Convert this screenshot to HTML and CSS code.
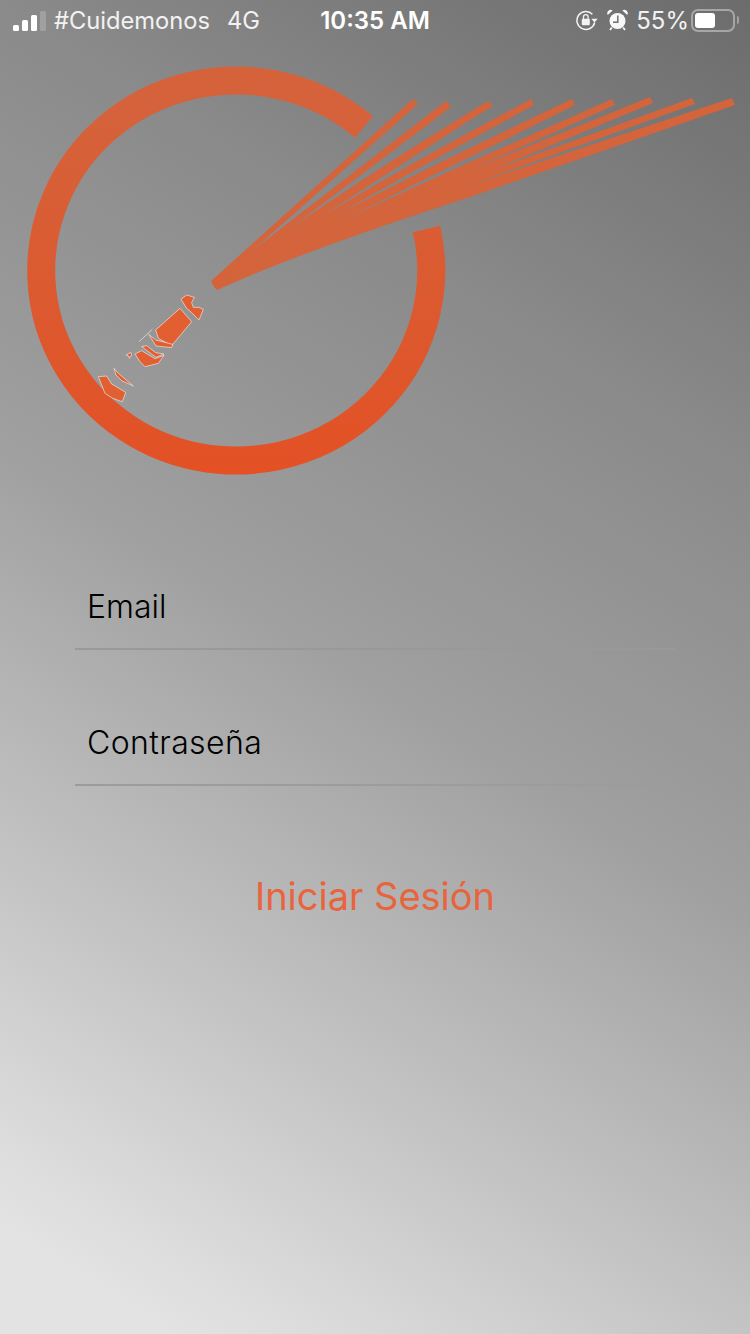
FILE: index.html
```html
<!DOCTYPE html>
<html lang="es">
<head>
<meta charset="utf-8">
<title>Iniciar Sesión</title>
<link rel="stylesheet" href="styles.css">
</head>
<body>
<main class="screen">
  <header class="status">
    <div class="status-left">
      <span class="signal"><i class="b b1"></i><i class="b b2"></i><i class="b b3"></i><i class="b b4"></i></span>
      <span class="carrier">#Cuidemonos</span>
      <span class="net">4G</span>
    </div>
    <div class="status-time">10:35 AM</div>
    <div class="status-right">
      <svg class="ico-lock" viewBox="0 0 23 22" width="23" height="22">
        <path d="M17.4 5.200A9 9 0 1 0 19.700 13.500" fill="none" stroke="#f4f4f4" stroke-width="1.500"/>
        <path d="M16.300 9.800h6.400l-3.200 3.800z" fill="#f4f4f4"/>
        <rect x="6.800" y="9.800" width="8" height="6.400" rx="1" fill="#f4f4f4"/>
        <path d="M8.500 10V8a2.300 2.300 0 0 1 4.600 0V10" fill="none" stroke="#f4f4f4" stroke-width="1.300"/>
      </svg>
      <svg class="ico-alarm" viewBox="0 0 21 22" width="21" height="22">
        <circle cx="10.500" cy="12" r="8" fill="#f8f8f8"/>
        <path d="M10.800 6.500V13.300H6" fill="none" stroke="#6f6f6f" stroke-width="1.500"/>
        <path d="M.8 6 5.600 1.400A3.400 3.400 0 0 0 .8 6zM20.200 6 15.400 1.400A3.400 3.400 0 0 1 20.200 6z" fill="#f8f8f8"/>
        <path d="M4.800 18.400 3 21M16.200 18.400 18 21" stroke="#f8f8f8" stroke-width="1.800"/>
      </svg>
      <span class="pct">55%</span>
      <span class="battery"><span class="battery-fill"></span></span>
      <span class="battery-cap"></span>
    </div>
  </header>

  <svg class="logo" viewBox="0 40 750 480" width="750" height="480" aria-label="Logo">
    <defs>
      <linearGradient id="logoGrad" gradientUnits="userSpaceOnUse" x1="0" y1="120" x2="0" y2="470">
        <stop offset="0" stop-color="#d5623a"/>
        <stop offset="1" stop-color="#e35125"/>
      </linearGradient>
    </defs>
    <path class="ring" d="M364 127A195 190 0 1 0 426.500 229"/>
    <g class="rays">
      <path d="M211 281 413 99 418 104 213.500 285Z"/>
      <path d="M211.700 282 446 101 451 107 214 286Z"/>
      <path d="M212.300 283Q340 191 470 112L488 101 493 106 470 120Q340 204 214.500 287Z"/>
      <path d="M213 284Q340 202 470 132L531 99 534 105 470 140Q340 211 215 288Z"/>
      <path d="M213.700 285Q320 220 470 148L572 99 575 105 470 157Q320 231 215.500 288Z"/>
      <path d="M214.300 286Q320 229 470 162L612 99 615 105 470 170Q320 237 216 289Z"/>
      <path d="M215 287Q310 235 470 170L650 97 653 103 470 179Q310 245 216.500 289Z"/>
      <path d="M215.700 288Q300 239 470 178L692 98 695 104 470 185Q300 246 217 290Z"/>
      <path d="M216.300 289Q300 241 470 185L732 98 735 105 470 197Q300 252 217 290Z"/>
    </g>
    <g class="shards" transform="translate(90 280) scale(.33333)">
      <path d="M273 58 290 45 313 52 305 68 310 82 327 82 340 88 327 120 305 98 290 85Z"/>
      <path d="M197 150 270 85 305 125 245 197 205 175Z"/>
      <path d="M176 163 197 180 248 193 245 203 198 198Z"/>
      <path d="M155 200 170 197 197 218 222 222 198 232Z"/>
      <path d="M135 222 155 212 195 236 222 226 205 250 165 260 150 245Z"/>
      <path d="M25 290 50 288 65 312 107 337 97 365 68 355 45 340Z"/>
      <path d="M72 265 85 280 130 318 95 302 78 285Z"/>
      <path d="M108 225 122 217 125 225 118 235 116 228Z"/>
      <path class="sliver" d="M147 185 187 148"/>
    </g>
  </svg>

  <form class="form">
    <div class="field field-email">Email</div>
    <div class="field field-pass">Contraseña</div>
    <button class="submit" type="button">Iniciar Sesión</button>
  </form>
</main>
</body>
</html>
```

FILE: styles.css
```css
* { box-sizing: border-box; }
html, body { margin: 0; padding: 0; }
body { width: 750px; height: 1334px; overflow: hidden; font-family: Inter, "Liberation Sans", sans-serif; }
.screen {
  width: 750px;
  height: 1334px;
  background: linear-gradient(212deg, #6c6c6c 0%, #8a8a8a 26%, #9f9f9f 50%, #c4c4c4 74%, #dcdcdc 89%, #e3e3e3 94%, #e3e3e3 100%);
  display: flex;
  flex-direction: column;
}
.status {
  height: 40px;
  padding: 0 11px 0 13px;
  display: flex;
  align-items: center;
  justify-content: space-between;
  color: #fff;
  font-size: 23.7px;
  position: relative;
}
.status-left { display: flex; align-items: center; font-weight: 400; color: #f2f2f2; }
.signal { display: flex; align-items: flex-end; gap: 3px; height: 21px; width: 33px; margin-right: 8px; }
.b { display: block; width: 6px; background: #fff; border-radius: 1.500px; }
.b1 { height: 6px; }
.b2 { height: 11px; }
.b3 { height: 16px; }
.b4 { height: 20px; background: #a0a0a0; }
.net { margin-left: 17px; }
.status-time { position: absolute; left: 0; right: 0; text-align: center; font-weight: 600; font-size: 24px; }
.status-right { display: flex; align-items: center; color: #f2f2f2; font-size: 24px; }
.ico-lock { margin-right: 9px; }
.ico-alarm { margin-right: 8px; }
.pct { margin-right: 2px; }
.battery { width: 44px; height: 23px; border: 2px solid #a6a6a6; border-radius: 7px; padding: 2px; display: block; }
.battery-fill { display: block; width: 20px; height: 15px; background: #fff; border-radius: 3px; }
.battery-cap { width: 2px; height: 8px; background: #a0a0a0; border-radius: 0 2px 2px 0; margin-left: 2px; }

.logo { display: block; flex: none; }
.ring { fill: none; stroke: url(#logoGrad); stroke-width: 28; }
.rays path { fill: #d4643b; }
.shards path { fill: #e25f32; stroke: #f1efed; stroke-width: 1.900; stroke-linejoin: round; }
.shards .sliver { fill: none; }

.form { display: flex; flex-direction: column; padding: 0 75px; margin-top: 57px; }
.field {
  height: 73px;
  padding: 10px 12px 0;
  font-size: 32px;
  font-weight: 300;
  line-height: 40px;
  color: #000;
  border-bottom: 2px solid #999;
}
.field-pass { margin-top: 63px; letter-spacing: .4px; border-bottom-color: #9c9c9c; }
.submit {
  margin-top: 86px;
  padding: 0;
  border: 0;
  background: none;
  font: 400 38px/48px Inter, "Liberation Sans", sans-serif;
  color: #e8643d;
  text-align: center;
}
```
